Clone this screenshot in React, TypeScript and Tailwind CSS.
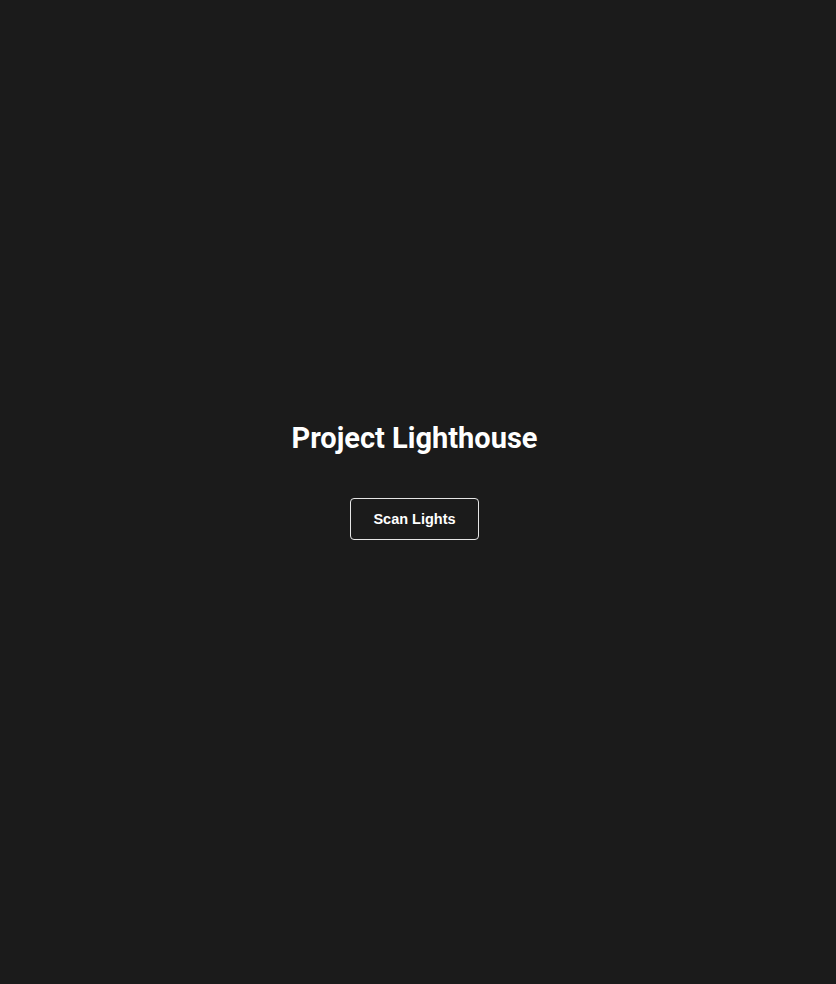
export default function App() {
    return (
        <div className="min-h-screen bg-[#1b1b1b] flex flex-col items-center justify-center pb-[23px] pr-[7px]">
            <h1 className="text-[29px] leading-[34px] font-bold text-white font-['Roboto',sans-serif]">
                Project Lighthouse
            </h1>
            <button
                type="button"
                className="mt-[43px] w-[129px] h-[42px] flex items-center justify-center border border-[#e5e5e5] rounded-[4px] text-[14.5px] leading-[18px] font-bold text-white font-['Liberation_Sans',Arial,sans-serif] bg-transparent"
            >
                Scan Lights
            </button>
        </div>
    )
}
